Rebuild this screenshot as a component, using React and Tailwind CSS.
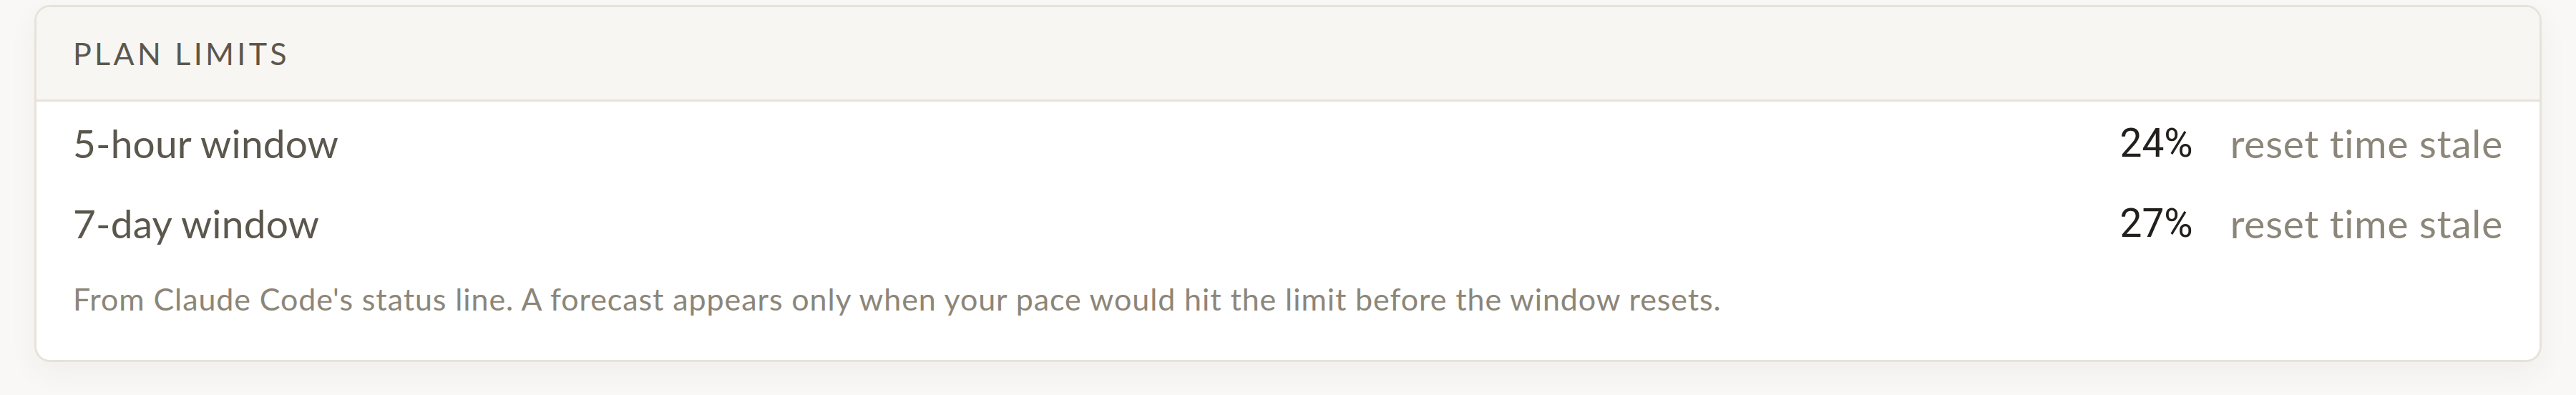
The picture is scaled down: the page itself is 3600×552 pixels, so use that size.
import React from "react";

const rows = [
  { label: "5-hour window", pct: "24%", note: "reset time stale" },
  { label: "7-day window", pct: "27%", note: "reset time stale" },
];

export default function App() {
  return (
    <div className="min-h-[552px] bg-[#f9f8f6] px-[48px] pt-[7px] font-['Lato',sans-serif]">
      <div className="overflow-hidden rounded-[22px] border-[3px] border-[#e7e2da] bg-white shadow-[0_14px_40px_rgba(60,50,30,0.05)]">
        {/* header */}
        <div className="flex h-[132px] items-center border-b-[3px] border-[#e7e2da] bg-[#f7f6f3] px-[51px]">
          <span className="text-[43px] leading-none tracking-[0.1em] text-[#5c574d] uppercase">
            Plan limits
          </span>
        </div>

        <div className="px-[51px] pt-[2px] pb-[55px]">
          {rows.map((r) => (
            <div key={r.label} className="flex h-[112px] items-center justify-between">
              <span className="text-[55px] leading-none tracking-[0.2px] text-[#5c574d]">{r.label}</span>
              <div className="flex items-center gap-[52px]">
                <span className="font-['Roboto',sans-serif] text-[55px] leading-none text-[#22201c] tabular-nums">
                  {r.pct}
                </span>
                <span className="text-[55px] leading-none tracking-[0.8px] text-[#8c8679]">{r.note}</span>
              </div>
            </div>
          ))}
          <p className="mt-[20px] text-[43px] leading-[60px] tracking-[0.9px] text-[#8c8679]">
            From Claude Code's status line. A forecast appears only when your pace would hit the limit before the window resets.
          </p>
        </div>
      </div>
    </div>
  );
}
